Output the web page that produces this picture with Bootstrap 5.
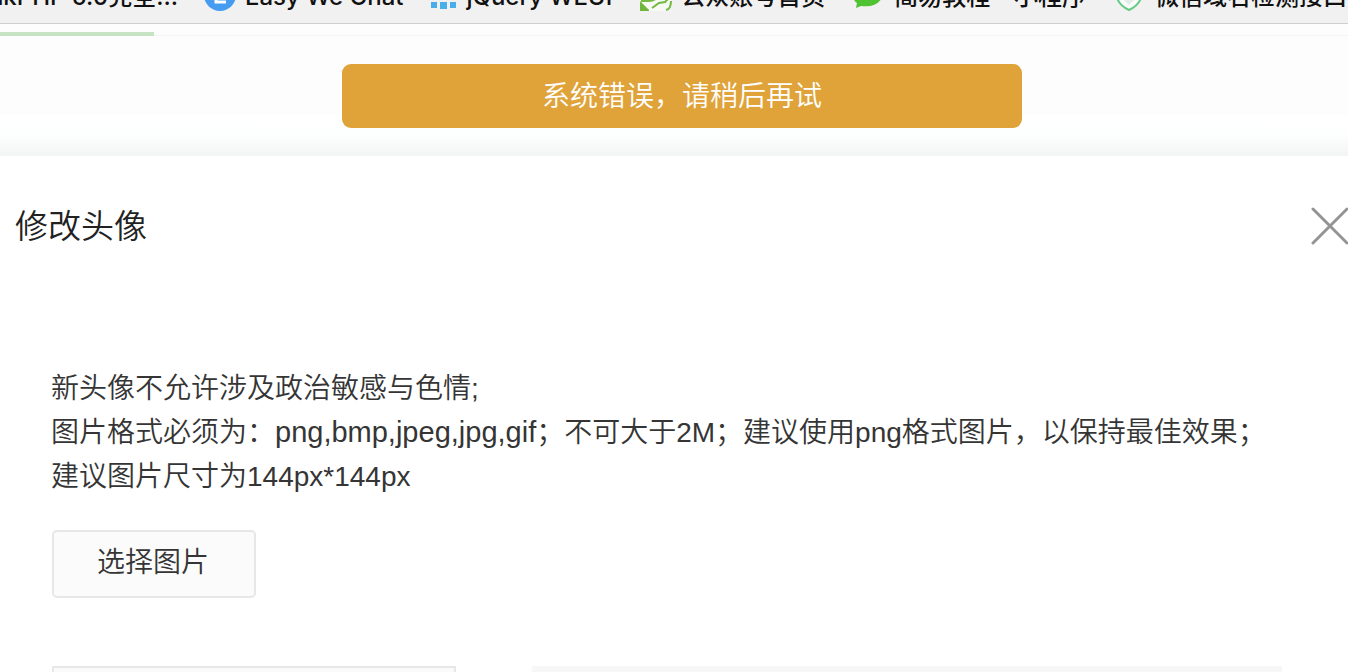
<!DOCTYPE html>
<html lang="zh-CN">
<head>
<meta charset="utf-8">
<meta name="viewport" content="width=device-width, initial-scale=1">
<title>修改头像</title>
<link href="https://cdn.jsdelivr.net/npm/bootstrap@5.3.0/dist/css/bootstrap.min.css" rel="stylesheet">
<style>
body { font-family: "Liberation Sans", "Noto Sans CJK SC", sans-serif; font-weight: 350; font-size: 28px; line-height: 44px; color: #353535; height: 100vh; }
.bookmarks { height: 24px; padding-bottom: 10px; gap: 28px; background: #f1f1f1; border-bottom: 1px solid #cfcfcf; font: 500 24px/32px Inter, "Noto Sans CJK SC", sans-serif; }
.bookmarks a { color: #111; gap: 9px; }
.bookmarks .bm-first { width: 178px; }
.backdrop-area { height: 132px; background: linear-gradient(#fdfdfd 91px, #fff 91px, #fdfefe 112px, #f2f5f4 132px); }
.tab-line { height: 12px; border-bottom: 1px solid #f5f5f5; }
.tab-current { width: 154px; height: 4px; background: #c6e4c4; margin-bottom: -1px; }
.toast-strip { width: 680px; height: 64px; padding-top: 2px; background: #dfa33a; color: #fff; border-radius: 9px; margin-top: 28px; }
.dialog-title { font-size: 33px; line-height: 44px; font-weight: 350; color: #222; padding-top: 2px; }
.dialog-head { padding: 47px 0 0 15px; }
.dialog-body { padding: 118px 52px 0 51px; }
.formats { font-size: 29px; line-height: 1; }
.btn-pick { width: 204px; height: 68px; padding: 0 2px 2px 0; border: 2px solid #e7e7e7; border-radius: 5px; background: #fbfbfb; color: #353535; font-size: 28px; font-weight: 350; margin: 31px 0 68px 1px; }
.crop-box { width: 404px; height: 404px; border: 2px solid #e7e7e7; background: #fafafa; margin-left: 1px; }
.preview-box { max-width: 750px; height: 404px; background: #f7f7f7; }
.boxes { gap: 76px; }
</style>
</head>
<body class="bg-white overflow-hidden">
<nav class="bookmarks d-flex align-items-end overflow-hidden text-nowrap" aria-label="书签">
  <a href="#" class="bm-first d-flex justify-content-end flex-shrink-0 text-decoration-none">ThinkPHP 5.0完全...</a>
  <a href="#" class="d-flex align-items-center flex-shrink-0 text-decoration-none">
    <svg class="overflow-visible" width="30" height="32" viewBox="0 0 30 32" aria-hidden="true"><circle cx="14" cy="14" r="16" fill="#459cf0"/><path d="M10 6v15h10M11 12h8" fill="none" stroke="#fff" stroke-width="3"/></svg>
    <span>Easy We Chat</span>
  </a>
  <a href="#" class="d-flex align-items-center flex-shrink-0 text-decoration-none">
    <svg width="26" height="32" viewBox="0 0 26 32" aria-hidden="true"><path d="M0 21h6v6H0zM9 21h7v7H9zM19 21h6v6h-6zM0 12h6v6H0zM9 12h7v6H9zM19 12h6v6h-6z" fill="#4aaeea"/></svg>
    <span>jQuery WEUI</span>
  </a>
  <a href="#" class="d-flex align-items-center flex-shrink-0 text-decoration-none">
    <svg width="32" height="32" viewBox="0 0 32 32" aria-hidden="true"><path d="M0 4h32v18q0 8-7 8H0z" fill="#f7faf4"/><path d="M0 20l9 9v1H0z" fill="#6fb63c"/><path d="M1 20h8q5 0 9-4M12 27l7-5 6-1 5-5M26 29q5-1 5-9" fill="none" stroke="#73b944" stroke-width="2"/></svg>
    <span>公众账号首页</span>
  </a>
  <a href="#" class="d-flex align-items-center flex-shrink-0 text-decoration-none">
    <svg width="32" height="32" viewBox="0 0 32 32" aria-hidden="true"><path d="M0 17q2 4 4 5l-1 5 5-2q15 2 21-8V0H0z" fill="#50c332"/></svg>
    <span>简易教程 - 小程序</span>
  </a>
  <a href="#" class="d-flex align-items-center flex-shrink-0 text-decoration-none">
    <svg width="32" height="32" viewBox="0 0 32 32" aria-hidden="true"><path d="M3 8v9q3 8 12 12 9-4 12-12V8" fill="#fafcfb" stroke="#65ca83" stroke-width="2"/><path d="M8 17l7 7 7-7" fill="#e4ece8"/></svg>
    <span>微信域名检测接口</span>
  </a>
</nav>
<div class="backdrop-area">
  <div class="tab-line d-flex align-items-end"><div class="tab-current"></div></div>
  <div class="d-flex justify-content-center ps-3">
    <div class="toast-strip d-flex align-items-center justify-content-center" role="alert">系统错误，请稍后再试</div>
  </div>
</div>
<main>
  <header class="dialog-head d-flex justify-content-between align-items-center">
    <h1 class="dialog-title m-0">修改头像</h1>
    <button type="button" class="border-0 bg-transparent p-0 d-flex" aria-label="关闭">
      <svg width="37" height="38" viewBox="0 0 37 38" aria-hidden="true"><path d="M2 2l34 34M36 2L2 36" stroke="#949494" stroke-width="3" stroke-linecap="round"/></svg>
    </button>
  </header>
  <section class="dialog-body">
    <p class="m-0">新头像不允许涉及政治敏感与色情;<br>图片格式必须为：<span class="formats">png,bmp,jpeg,jpg,gif</span>；不可大于2M；建议使用png格式图片，以保持最佳效果；<br>建议图片尺寸为144px*144px</p>
    <button type="button" class="btn-pick d-block">选择图片</button>
    <div class="boxes d-flex">
      <div class="crop-box flex-shrink-0"></div>
      <div class="preview-box flex-grow-1"></div>
    </div>
  </section>
</main>
<script src="https://cdn.jsdelivr.net/npm/bootstrap@5.3.0/dist/js/bootstrap.bundle.min.js"></script>
</body>
</html>
